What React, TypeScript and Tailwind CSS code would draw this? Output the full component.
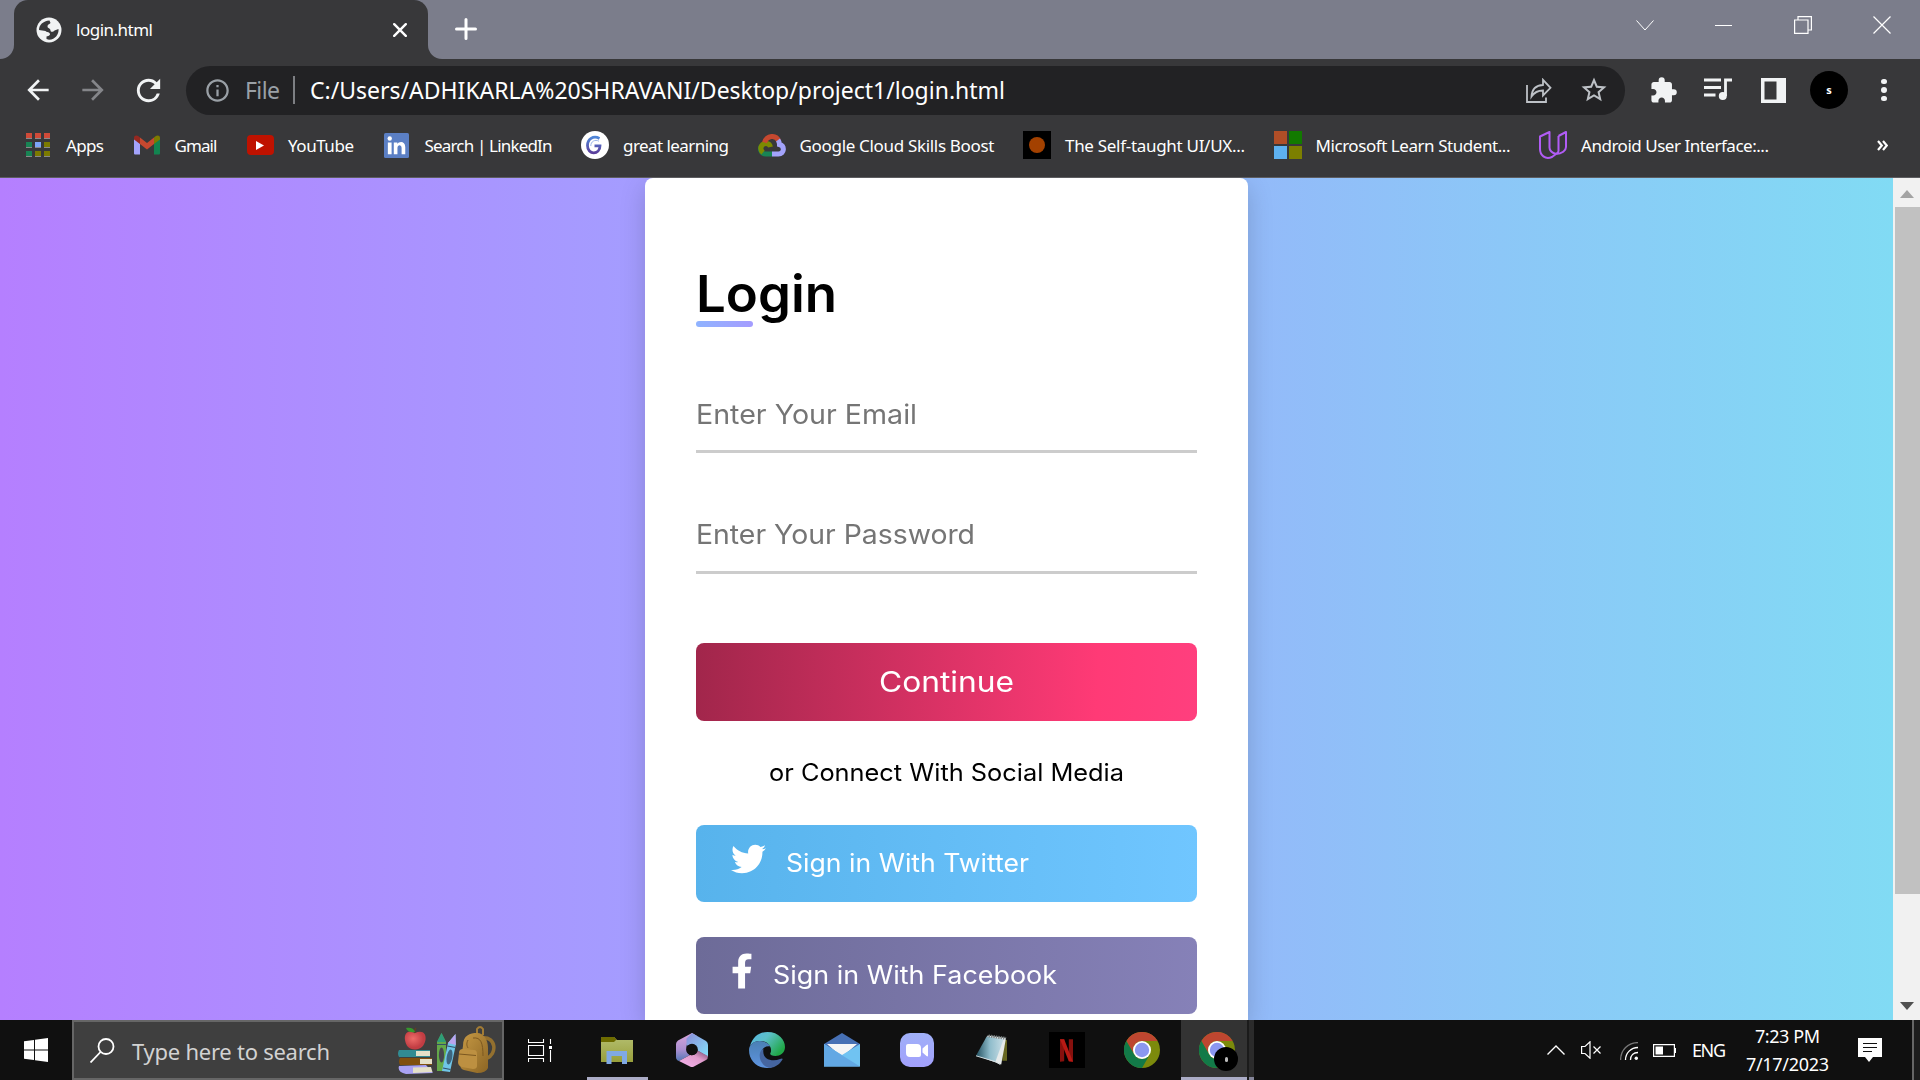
import React, { useLayoutEffect, useRef, useState } from "react";
import {
  MdArrowBack,
  MdArrowForward,
  MdExtension,
  MdOutlineInfo,
  MdRefresh,
  MdStarBorder,
} from "react-icons/md";
import { FaFacebookF, FaTwitter } from "react-icons/fa";

const UI = "font-['Noto_Sans','Open_Sans',sans-serif]";

/**
 * Single line of text that spans `w` pixels, by tracking or,
 * with `stretch`, by widening the letters themselves.
 */
function Fit({
  w,
  className = "",
  stretch = false,
  children,
}: {
  w: number;
  className?: string;
  stretch?: boolean;
  children: string;
}) {
  const ref = useRef<HTMLSpanElement>(null);
  const [fit, setFit] = useState<React.CSSProperties>({});
  useLayoutEffect(() => {
    if (!ref.current) return;
    const natural = ref.current.getBoundingClientRect().width;
    setFit(stretch ? { transform: `scaleX(${w / natural})` } : { letterSpacing: (w - natural) / (children.length - 1) });
  }, []);
  return (
    <span className={"block shrink-0 text-left leading-none whitespace-nowrap " + className} style={{ width: w }}>
      <span ref={ref} className="inline-block origin-left" style={fit}>
        {children}
      </span>
    </span>
  );
}

function TabStrip() {
  return (
    <div className="flex h-[59px] bg-[#7b7d8b]">
      <div className="flex w-[14px] items-end bg-[#38383a]">
        <div className="h-full w-[14px] rounded-br-[14px] bg-[#7b7d8b]" />
      </div>
      <div className="flex bg-[#7b7d8b]">
        <div className="flex w-[414px] items-center rounded-t-[14px] bg-[#38383a] pl-[22px]">
          <svg viewBox="0 0 26 26" className="size-[26px]">
            <circle cx="13" cy="13" r="12.500" fill="#f1f3f4" />
            <path
              d="M3 13C3 8 7 4 13.500 3.500L14.500 6C13 7.500 11.500 7.500 11.500 9.500 11.500 11.500 14.500 11 14.500 13.500 14.500 15.500 17.500 15 18.500 13.500L22.500 12C23 17 19.500 22.500 13 22.800L10.500 22V19.500C13 19 15 18 13.500 16 12 14.500 10.500 15.500 9.500 14L3 13Z"
              fill="#38383a"
            />
          </svg>
          <Fit w={77} className="ml-[14px] text-[17px] text-white">login.html</Fit>
          <svg viewBox="0 0 14 14" className="ml-[240px] size-[14px]" stroke="#fff" strokeWidth="2.4" strokeLinecap="round">
            <path d="M1.2 1.2 12.8 12.8M12.8 1.2 1.2 12.8" />
          </svg>
        </div>
      </div>
      <div className="w-[14px] bg-[#38383a]">
        <div className="h-full w-[14px] rounded-bl-[14px] bg-[#7b7d8b]" />
      </div>
      <svg viewBox="0 0 22 22" className="mt-[18px] ml-[13px] size-[22px]" stroke="#fff" strokeWidth="3" strokeLinecap="round">
        <path d="M11 1.5V20.5M1.5 11H20.5" />
      </svg>
      <div className="flex-1" />
      <div className="mt-[15px] mr-[29px] flex h-[20px] items-center text-white">
        <svg viewBox="0 0 18 11" className="h-[11px] w-[18px]" fill="none" stroke="currentColor" strokeWidth="1">
          <path d="M.5.5 9 10 17.5.5" />
        </svg>
        <div className="ml-[61px] h-px w-[17px] bg-white" />
        <svg viewBox="0 0 18 18" className="ml-[62px] size-[18px]" fill="none" stroke="currentColor" strokeWidth="1.2">
          <path d="M.6 4H14V17.4H.6ZM4 4V.6H17.4V14H14" />
        </svg>
        <svg viewBox="0 0 18 18" className="ml-[61px] size-[18px]" fill="none" stroke="currentColor" strokeWidth="1.2">
          <path d="M.5.5 17.5 17.5M17.5.5.5 17.5" />
        </svg>
      </div>
    </div>
  );
}

function Toolbar() {
  return (
    <div className="flex h-[62px] items-center bg-[#38383a] pl-[22px]">
      <MdArrowBack className="size-[32px] text-[#f1f3f4]" />
      <MdArrowForward className="ml-[23px] size-[32px] text-[#85868a]" />
      <MdRefresh className="ml-[22px] size-[35px] text-[#f1f3f4]" />
      <div className="ml-[20px] flex h-[49px] w-[1439px] items-center rounded-full bg-[#222224] pl-[18px] text-[23px]">
        <MdOutlineInfo className="size-[27px] text-[#9aa0a6]" />
        <Fit w={35} className="ml-[14px] text-[#9aa0a6]">File</Fit>
        <div className="ml-[13px] h-[28px] w-[2px] bg-[#7d7f83]" />
        <Fit w={695} className="ml-[15px] text-white">C:/Users/ADHIKARLA%20SHRAVANI/Desktop/project1/login.html</Fit>
        <svg viewBox="0 0 26 25" className="ml-[521px] h-[25px] w-[26px]" fill="none" stroke="#bdc1c6" strokeWidth="1.8">
          <path d="M1 7V24H20V19.5" />
          <path d="M5.5 18.5C6 11 10 7.200 17 7V1.800L24.500 9.800 17 17.500V12.500C12 12.500 8.500 14 5.500 18.500Z" />
        </svg>
        <MdStarBorder className="ml-[27px] size-[30px] text-[#bdc1c6]" />
      </div>
      <MdExtension className="ml-[24px] size-[29px] text-[#f1f3f4]" />
      <svg viewBox="0 0 28 22" className="-mt-[3px] ml-[26px] h-[22px] w-[28px]" fill="none" stroke="#f1f3f4" strokeWidth="2.8">
        <path d="M0 2H17M0 9.500H17M0 17H11.500M21.500 18V2H28" />
        <circle cx="18.800" cy="18" r="2.600" fill="#f1f3f4" />
      </svg>
      <svg viewBox="0 0 25 25" className="ml-[29px] size-[25px]">
        <path d="M0 0H25V25H0ZM3.500 3.500V21.500H15.500V3.500Z" fill="#f1f3f4" fillRule="evenodd" />
      </svg>
      <div className="ml-[24px] flex size-[38px] items-center justify-center rounded-full bg-black text-[11px] font-bold text-white">s</div>
      <div className="ml-[33px] flex flex-col gap-[3px]">
        <div className="size-[5.500px] rounded-full bg-[#f1f3f4]" />
        <div className="size-[5.500px] rounded-full bg-[#f1f3f4]" />
        <div className="size-[5.500px] rounded-full bg-[#f1f3f4]" />
      </div>
    </div>
  );
}

const APP_DOTS = ["#cf4a38", "#cf4a38", "#cf4a38", "#188454", "#7ca6f8", "#7c7a00", "#188454", "#7c7a00", "#7c7a00"];

const bookmarks: { label: string; w: number; icon: React.ReactNode }[] = [
  {
    label: "Apps",
    w: 38,
    icon: (
      <div className="ml-[2px] grid w-[24px] grid-cols-3 gap-[3px]">
        {APP_DOTS.map((c, i) => (
          <div key={i} className="h-[6px] w-[6px] border-b border-[#8a8a8a]" style={{ backgroundColor: c }} />
        ))}
      </div>
    ),
  },
  {
    label: "Gmail",
    w: 43,
    icon: (
      <svg viewBox="0 0 26 20" className="mx-auto h-[20px] w-[26px]">
        <path d="M0 3V18.500Q0 19.500 1 19.500H6V8.500Z" fill="#a3a3fb" />
        <path d="M26 3V18.500Q26 19.500 25 19.500H20V8.500Z" fill="#128450" />
        <path d="M6 2.500 13 8 20 2.500V9L13 14.500 6 9Z" fill="#c6482f" />
        <path d="M0 3C0 0 3 0 4.500 1.200L6 2.500V9L0 4.600Z" fill="#952820" />
        <path d="M26 3C26 0 23 0 21.500 1.200L20 2.500V9L26 4.600Z" fill="#7c7a00" />
      </svg>
    ),
  },
  {
    label: "YouTube",
    w: 66,
    icon: (
      <div className="mx-auto flex h-[20px] w-[27px] items-center justify-center rounded-[4px] bg-[#bf1200]">
        <svg viewBox="0 0 8 9" className="h-[9px] w-[8px]"><path d="M0 0 8 4.500 0 9Z" fill="#fff" /></svg>
      </div>
    ),
  },
  {
    label: "Search | LinkedIn",
    w: 128,
    icon: (
      <svg viewBox="0 0 24 24" className="mx-auto size-[25px]">
        <rect width="24" height="24" rx="1.500" fill="#5b7fc4" />
        <circle cx="5.500" cy="5.300" r="2.100" fill="#fff" />
        <path d="M3.700 9H7.300V20.300H3.700ZM9.400 9H12.800V10.600C14.800 7.600 20.400 8 20.400 13.400V20.300H16.900V14.300C16.900 10.800 12.900 11 12.900 14.300V20.300H9.400Z" fill="#fff" />
      </svg>
    ),
  },
  {
    label: "great learning",
    w: 106,
    icon: (
      <svg viewBox="0 0 28 28" className="size-[28px]">
        <defs>
          <linearGradient id="gl" x1="0" y1="0" x2="0" y2="1"><stop stopColor="#4f86d8" /><stop offset="1" stopColor="#5b3f9c" /></linearGradient>
        </defs>
        <circle cx="14" cy="14" r="14" fill="#fff" />
        <path d="M18.500 7.400C12 4 6.500 8.500 6.500 14.500 6.500 24.500 19 24 19 14.800H13.500" fill="none" stroke="url(#gl)" strokeWidth="2.800" />
        <path d="M18 10.200C14 8 9.700 10.500 9.800 15" fill="none" stroke="#9cb6e8" strokeWidth="1" />
      </svg>
    ),
  },
  {
    label: "Google Cloud Skills Boost",
    w: 195,
    icon: (
      <svg viewBox="0 0 28 23" className="h-[23px] w-[28px]" fill="none" strokeWidth="5">
        <path d="M14 20H7.500A5 5 0 0 1 4 11.500" stroke="#188454" />
        <path d="M5 18.500C1 15 3 9.500 8 9.500 10.500 9.500 12 11 12.500 13" stroke="#7c8a00" />
        <path d="M6.500 8.500C9 1 18 .800 20.500 6.500" stroke="#c6482f" />
        <path d="M20 6C21.500 8 21.500 9.500 21.500 10.500 27 12 26.500 20 20.500 20H14" stroke="#a3a3fb" />
      </svg>
    ),
  },
  {
    label: "The Self-taught UI/UX...",
    w: 180,
    icon: (
      <div className="flex size-[28px] items-center justify-center bg-black">
        <div className="size-[16px] rounded-full bg-[#a34100]" />
      </div>
    ),
  },
  {
    label: "Microsoft Learn Student...",
    w: 195,
    icon: (
      <div className="grid size-[28px] grid-cols-2 gap-[2px]">
        <div className="bg-[#b04e27]" />
        <div className="bg-[#127a00]" />
        <div className="bg-[#5eb1f0]" />
        <div className="bg-[#7c7f00]" />
      </div>
    ),
  },
  {
    label: "Android User Interface:...",
    w: 188,
    icon: (
      <svg viewBox="0 0 28 28" className="size-[28px]" fill="none" stroke="#b15cf5" strokeWidth="2" strokeLinejoin="round">
        <path d="M1 5.500 10.500 1V16.500C10.500 19 12 21.500 17 23L13 26C6 29 1 24 1 18ZM19.500 5 27 1V16C27 19.500 23 23 17 23M19.500 5V20C19.500 21.500 18 22.500 17 23" />
      </svg>
    ),
  },
];

function Bookmarks() {
  return (
    <div className="flex h-[57px] items-center gap-[28.5px] border-b border-[#5d5d60] bg-[#38383a] pb-[8px] pl-[24px] text-[17px] text-white">
      {bookmarks.map((b) => (
        <div key={b.label} className="flex items-center">
          <div className="w-[28px]">{b.icon}</div>
          <Fit w={b.w} className="mt-px ml-[14px]">{b.label}</Fit>
        </div>
      ))}
      <svg viewBox="0 0 11 11" className="ml-[79px] size-[11px]" fill="none" stroke="#fff" strokeWidth="2.200">
        <path d="M1 1 4.800 5.500 1 10M6 1 9.800 5.500 6 10" />
      </svg>
    </div>
  );
}

function LoginCard() {
  return (
    <div className="flex h-full w-[603px] shrink-0 flex-col rounded-t-[8px] bg-white px-[51px] pt-[90px] font-['Inter',sans-serif] shadow-[0_8px_26px_rgba(0,0,0,0.17)]">
      <Fit w={141} stretch className="text-[51px] font-semibold text-black">Login</Fit>
      <div className="mt-[2px] h-[6px] w-[57px] shrink-0 rounded-full bg-linear-to-r from-[#8fb3ff] to-[#a49cff]" />
      <div className="mt-[67px] flex h-[59px] shrink-0 items-center border-b-[3px] border-[#ccc] pb-[16px]">
        <Fit w={221} stretch className="text-[27px] text-[#757575]">Enter Your Email</Fit>
      </div>
      <div className="mt-[61px] flex h-[60px] shrink-0 items-center border-b-[3px] border-[#ccc] pb-[17px]">
        <Fit w={279} stretch className="text-[27px] text-[#757575]">Enter Your Password</Fit>
      </div>
      <button className="mt-[69px] flex h-[78px] shrink-0 items-center justify-center rounded-[8px] bg-linear-[92deg,#a1264b,#ff3a76_80%,#ff3f7e] text-white">
        <Fit w={135} stretch className="text-[28px]">Continue</Fit>
      </button>
      <div className="mt-[40px] flex h-[24px] shrink-0 justify-center">
        <Fit w={355} stretch className="text-[24px] text-black">or Connect With Social Media</Fit>
      </div>
      <button className="mt-[40px] flex h-[77px] shrink-0 items-center rounded-[8px] bg-linear-[92deg,#57b3ec,#70c6ff] pl-[35px] text-white">
        <FaTwitter className="mb-[10px] h-[36px] w-[35px]" />
        <Fit w={243} stretch className="ml-[20px] text-[25px]">Sign in With Twitter</Fit>
      </button>
      <button className="mt-[35px] flex h-[77px] shrink-0 items-center rounded-[8px] bg-linear-[92deg,#6d6b98,#8681b8] pl-[35px] text-white">
        <FaFacebookF className="mb-[9px] h-[36px] w-[22px]" />
        <Fit w={284} stretch className="ml-[20px] text-[25px]">Sign in With Facebook</Fit>
      </button>
    </div>
  );
}

function Page() {
  return (
    <div className="flex h-[842px] overflow-hidden">
      <div className="flex w-[1893px] justify-center overflow-hidden bg-linear-[90deg,#b57fff,#a49dff_34%,#93baf9_66%,#81dbf4]">
        <LoginCard />
      </div>
      <div className="flex w-[27px] flex-col items-center bg-[#f1f1f1] py-[12px]">
        <svg viewBox="0 0 14 8" className="h-[8px] w-[14px]"><path d="M0 8 7 0 14 8Z" fill="#a3a3a3" /></svg>
        <div className="mt-[9px] ml-[2px] h-[687px] w-[25px] bg-[#c1c1c1]" />
        <svg viewBox="0 0 14 8" className="mt-auto -mb-[2px] h-[8px] w-[14px]"><path d="M0 0H14L7 8Z" fill="#505050" /></svg>
      </div>
    </div>
  );
}

function SchoolSupplies() {
  return (
    <svg viewBox="0 0 98 48" className="h-[48px] w-[98px]">
      <defs>
        <linearGradient id="bag" x1="0" y1="0" x2="1" y2="1"><stop stopColor="#c79a45" /><stop offset="1" stopColor="#8c6524" /></linearGradient>
        <radialGradient id="apple" cx=".4" cy=".4"><stop stopColor="#ee6b68" /><stop offset="1" stopColor="#c23d43" /></radialGradient>
      </defs>
      <path d="M17 7C10 3 6 7 7 14 8 20 11 23.500 17 23.500S26 20 27.500 14C28.500 7 24 4 17 7Z" fill="url(#apple)" />
      <path d="M17 7C16 4 17 3 18 2" stroke="#65401c" strokeWidth="1.200" fill="none" />
      <path d="M8 2C12 1 16 2 17 6 12 7 9 5 8 2Z" fill="#36972e" />
      <path d="M1 24H32V31H1Q-1 27.500 1 24Z" fill="#318b92" />
      <path d="M18 25H32V30H18Z" fill="#e4e0c8" />
      <path d="M2 32H34V39H2Q0 35.500 2 32Z" fill="#80500f" />
      <path d="M22 33H34V38H22Z" fill="#e4e0c8" />
      <path d="M1 40 28 39 35 47 8 48Q-1 46 1 40Z" fill="#aaa2f4" />
      <path d="M15 41.500 33 41 34.500 46 15 47Z" fill="#e4e0c8" />
      <path d="M39 16 43.500 7 48 16V45H39Z" fill="#64a94a" />
      <path d="M39 16 43.500 7 48 16Z" fill="#2e9c78" />
      <path d="M50 17 57.500 8 57.800 19 52 46 44 45Z" fill="#6fc5e8" />
      <path d="M50 17 57.500 8 57.800 19Z" fill="#bba4ef" />
      <path d="M39 18.500H48M49.500 20 57.500 21.500M45 42 52.500 43.500" stroke="#35506a" strokeWidth="1.200" />
      <ellipse cx="43.500" cy="29" rx="2.600" ry="7.500" fill="#46474f" />
      <ellipse cx="51.500" cy="31" rx="2.800" ry="7.500" fill="#3e6680" transform="rotate(10 51.500 31)" />
      <path d="M84 12C98 10 100 28 88 33" stroke="#93702f" strokeWidth="3.500" fill="none" />
      <path d="M79 8V3Q82-1 85 3V9" stroke="#a27c35" strokeWidth="2" fill="none" />
      <path d="M65 20C65 9 72 7 79 7S90 14 90 22V42Q88 47 79 47L66 44Q62 43 62 38Z" fill="url(#bag)" />
      <path d="M61 27Q61 23 65 23L76 24Q79 24 79 28V40Q79 43 75 43L64 41Q60 40 60 36Z" fill="#bd9041" />
      <path d="M61 28 78 29.500M70 14C68 18 69 20 70 22M75 12C83 11 85 17 85 30" stroke="#7c5820" strokeWidth="1" fill="none" />
    </svg>
  );
}

function Chrome() {
  return (
    <svg viewBox="0 0 36 36" className="size-[36px]">
      <circle cx="18" cy="18" r="18" fill="#7c8a0c" />
      <path d="M18 9H33.600A18 18 0 0 0 2.400 9L10.200 22.500A9 9 0 0 1 18 9Z" fill="#bd4630" />
      <path d="M2.400 9A18 18 0 0 0 18 36L25.800 22.500A9 9 0 0 1 10.200 22.500Z" fill="#127a48" />
      <circle cx="18" cy="18" r="9" fill="#fff" />
      <circle cx="18" cy="18" r="7.200" fill="#8b97f0" />
    </svg>
  );
}

function Explorer() {
  return (
    <svg viewBox="0 0 32 27" className="h-[27px] w-[32px]">
      <defs><linearGradient id="fold" x1="0" y1="0" x2="0" y2="1"><stop stopColor="#b3bd6e" /><stop offset="1" stopColor="#989f3b" /></linearGradient></defs>
      <path d="M0 1 1 0H13L16 3H32V25H0Z" fill="url(#fold)" />
      <path d="M0 1 1 0H13L15.500 2.500 13 5H0Z" fill="#6e6c00" />
      <path d="M5.500 14H26V27H21V19H10.500V27H5.500Z" fill="#80a9e4" />
    </svg>
  );
}

function Office() {
  return (
    <svg viewBox="0 0 32 34" className="h-[34px] w-[32px]">
      <defs>
        <linearGradient id="o1" x1="0" y1="0" x2="0" y2="1"><stop stopColor="#d9a5dc" /><stop offset=".6" stopColor="#a98ed0" /><stop offset="1" stopColor="#5578b8" /></linearGradient>
        <linearGradient id="o2" x1="0" y1="0" x2="1" y2="1"><stop stopColor="#8a8bd8" /><stop offset="1" stopColor="#84e2fb" /></linearGradient>
        <linearGradient id="o3" x1="0" y1="1" x2="1" y2="0"><stop stopColor="#f6b4ee" /><stop offset=".6" stopColor="#e09ccc" /><stop offset="1" stopColor="#6b4268" /></linearGradient>
      </defs>
      <path d="M16 0 2 7.500Q0 9 0 11V24Q0 27 3 28L14 22Q10.500 20 10.500 16.500V12L21 3Z" fill="url(#o1)" />
      <path d="M16 0 30 8Q32 9.500 32 12V24L21.500 17.500Q21 12 16 11L10.500 13V5.500Z" fill="url(#o2)" />
      <path d="M3 28 14 22Q20 23 21.500 17.500L32 23Q32 26 30 27L18 33.500Q16 34.500 14 33.500Z" fill="url(#o3)" />
      <circle cx="16" cy="16.500" r="5.800" fill="#101010" />
    </svg>
  );
}

function Edge() {
  return (
    <svg viewBox="0 0 36 36" className="size-[36px]">
      <defs>
        <linearGradient id="e1" x1="0" y1="0" x2="1" y2=".6"><stop stopColor="#57b7e8" /><stop offset=".45" stopColor="#5cc0c8" /><stop offset="1" stopColor="#20a848" /></linearGradient>
        <linearGradient id="e2" x1="0" y1="0" x2="0" y2="1"><stop stopColor="#4a80b4" /><stop offset="1" stopColor="#5f94e0" /></linearGradient>
      </defs>
      <path d="M1 14C4 4 11 0 18.500 0 30 0 36 8 36 15 36 21 31 24 26.500 24 22 24 20.500 22.500 21.500 21 24 15 18 8 10 9 6 9.500 3 11 1 14Z" fill="url(#e1)" />
      <path d="M0 18C0 12 6 8.500 11 9 16 9.500 20 12 21.500 14.500 16 13 12 17.500 12.500 22 13 29 18 33 23 35.500 10 38 0 30 0 18Z" fill="url(#e2)" />
      <path d="M12.500 18C8.500 23 11 34 21 36 27 35 31 32 33.500 27.500 34 26 32.500 26.300 31 27 23 30.500 12.500 27 14.500 17Z" fill="#4565a0" />
    </svg>
  );
}

function Mail() {
  return (
    <svg viewBox="0 0 36 34" className="h-[34px] w-[36px]">
      <path d="M0 11 18 0 36 11V18H0Z" fill="#4770b4" />
      <path d="M3 11H33L18 24Z" fill="#f5f5f5" />
      <path d="M0 11 18 22 36 11V33.500H0Z" fill="#70c3f2" />
      <path d="M0 11 36 33.500H0Z" fill="#62a8e4" />
    </svg>
  );
}

function Meet() {
  return (
    <div className="flex size-[34px] items-center justify-center rounded-[10px] bg-linear-to-b from-[#a0b0f8] to-[#a2a0fc]">
      <svg viewBox="0 0 22 13" className="h-[13px] w-[22px]" fill="#fff">
        <path d="M0 2Q0 0 2 0H11Q15 0 15 4V11Q15 13 13 13H4Q0 13 0 9ZM16.500 4.500 20.500 1Q22 0 22 1.500V11.500Q22 13 20.500 12L16.500 8.500Z" />
      </svg>
    </div>
  );
}

function Notepad() {
  return (
    <svg viewBox="0 0 33 32" className="size-[32px]">
      <defs><linearGradient id="np" x1="0" y1="0" x2="1" y2="0"><stop stopColor="#225060" /><stop offset=".5" stopColor="#8fbccb" /><stop offset="1" stopColor="#c8dde5" /></linearGradient></defs>
      <path d="M28 4 32 6V27L27 27Z" fill="#676722" />
      <path d="M12 1 31 3.500 26 31 4 23Z" fill="#e6eaea" />
      <path d="M11 2 28.500 5 20 28 0 22Z" fill="url(#np)" />
      <path d="M13 1.500 31 4" stroke="#7d8485" strokeWidth="3" strokeDasharray="1.500 1" />
      <path d="M0 22 20 28 25 31" stroke="#d5dfe2" fill="none" />
    </svg>
  );
}

function Netflix() {
  return (
    <div className="flex size-[36px] items-center justify-center bg-black">
      <svg viewBox="0 0 14 24" className="h-[23px] w-[13px]">
        <path d="M0 0H4.500V23.500L0 24ZM9.500 0H14V24L9.500 23.500Z" fill="#86100d" />
        <path d="M0 0H4.500L14 24 9.500 23.500Z" fill="#b81a14" />
      </svg>
    </div>
  );
}

const pinned = [<Explorer />, <Office />, <Edge />, <Mail />, <Meet />, <Notepad />, <Netflix />, <Chrome />];

function Taskbar() {
  return (
    <div className="flex h-[60px] bg-[#101010] text-white">
      <div className="flex w-[72px] items-center justify-center">
        <svg viewBox="0 0 24 24" className="size-[24px]" fill="#fff">
          <path d="M0 3.300 10 2V11.500H0ZM11 1.800 24 0V11.500H11ZM0 12.500H10V22L0 20.700ZM11 12.500H24V24L11 22.200Z" />
        </svg>
      </div>
      <div className="flex w-[432px] items-center border-2 border-[#666] bg-[#3f3f3f] pl-[16px]">
        <svg viewBox="0 0 25 25" className="size-[25px]" fill="none" stroke="#fff" strokeWidth="1.800">
          <circle cx="16" cy="8.500" r="7.500" />
          <path d="M10.500 14 .500 24.500" />
        </svg>
        <Fit w={198} className="mt-px ml-[17px] text-[22px] text-[#d2d2d2]">Type here to search</Fit>
        <div className="ml-[68px]"><SchoolSupplies /></div>
      </div>
      <div className="flex w-[83px] items-center pl-[24px]">
        <svg viewBox="0 0 24 23" className="h-[23px] w-[24px]" fill="none" stroke="#fff" strokeWidth="1.100">
          <path d="M.500 0V3.500H15.500V0M.500 6.500H15.500V16.500H.500ZM.500 23V19.500H15.500V23M22.500 0V5M22.500 11V23" />
          <path d="M21 7H24V10H21Z" fill="#fff" stroke="none" />
        </svg>
      </div>
      <div className="flex">
        {pinned.map((icon, i) => (
          <div key={i} className="flex h-full w-[75px] flex-col">
            <div className="flex h-[57px] w-[59px] items-center justify-center pt-[3px]">{icon}</div>
            {i === 0 && <div className="h-[3px] w-[61px] bg-[#abacc6]" />}
          </div>
        ))}
      </div>
      <div className="-ml-[6px] flex h-full w-[66px] flex-col bg-[#333]">
        <div className="relative flex h-[57px] items-center justify-center pt-[3px] pl-[6px]">
          <Chrome />
          <div className="absolute top-[27px] left-[33px] flex size-[24px] items-center justify-center rounded-full bg-black">
            <div className="h-[5px] w-[3px] rounded-full bg-[#bbb] blur-[0.5px]" />
          </div>
        </div>
        <div className="h-[3px] bg-[#abacc6]" />
      </div>
      <div className="flex w-[7px] flex-col border-l-2 border-[#1b1b1b] bg-[#2b2b2b]">
        <div className="mt-auto h-[3px] bg-[#85869a]" />
      </div>
      <div className="ml-auto flex items-center">
        <svg viewBox="0 0 18 10" className="h-[10px] w-[18px]" fill="none" stroke="#fff" strokeWidth="1.400"><path d="M.500 9.500 9 1 17.500 9.500" /></svg>
        <svg viewBox="0 0 21 18" className="ml-[16px] h-[18px] w-[21px]" fill="none" stroke="#fff" strokeWidth="1.200">
          <path d="M.600 5.500H4L9 .800V17.200L4 12.500H.600ZM12.500 5.500 19.500 12.500M19.500 5.500 12.500 12.500" />
        </svg>
        <svg viewBox="0 0 18 18" className="mt-[2px] ml-[18px] size-[18px]" fill="none" strokeWidth="1.300">
          <path d="M.600 18C.600 8 8 .600 18 .600" stroke="#777" />
          <path d="M5.500 18C5.500 11 11 5.500 18 5.500M10.500 18C10.500 13.500 13.500 10.500 18 10.500" stroke="#fff" />
          <circle cx="16.300" cy="16.300" r="1.700" fill="#fff" />
        </svg>
        <svg viewBox="0 0 23 13" className="ml-[15px] h-[13px] w-[23px]" fill="none" stroke="#fff" strokeWidth="1.200">
          <path d="M.600.600H21.400V12.400H.600ZM22.500 4V9" />
          <path d="M2.500 2.500H10V10.500H2.500Z" fill="#fff" stroke="none" />
        </svg>
        <Fit w={34} className="ml-[16px] text-[18px]">ENG</Fit>
        <div className="ml-[20px] flex w-[83px] flex-col items-center gap-[10px] text-[18px]">
          <Fit w={65}>7:23 PM</Fit>
          <Fit w={83}>7/17/2023</Fit>
        </div>
        <svg viewBox="0 0 24 24" className="ml-[29px] size-[24px]">
          <path d="M0 0H24V19H15L11 24 7 19H0Z" fill="#fff" />
          <path d="M5 5.500H19M5 9.500H19M5 13.500H14" stroke="#101010" strokeWidth="1.200" />
        </svg>
        <div className="ml-[30px] h-[60px] w-[8px] border-l-2 border-[#666] bg-[#1d1d1d]" />
      </div>
    </div>
  );
}

export default function App() {
  return (
    <div className={"flex h-[1080px] w-[1920px] flex-col overflow-hidden " + UI}>
      <TabStrip />
      <Toolbar />
      <Bookmarks />
      <Page />
      <Taskbar />
    </div>
  );
}
